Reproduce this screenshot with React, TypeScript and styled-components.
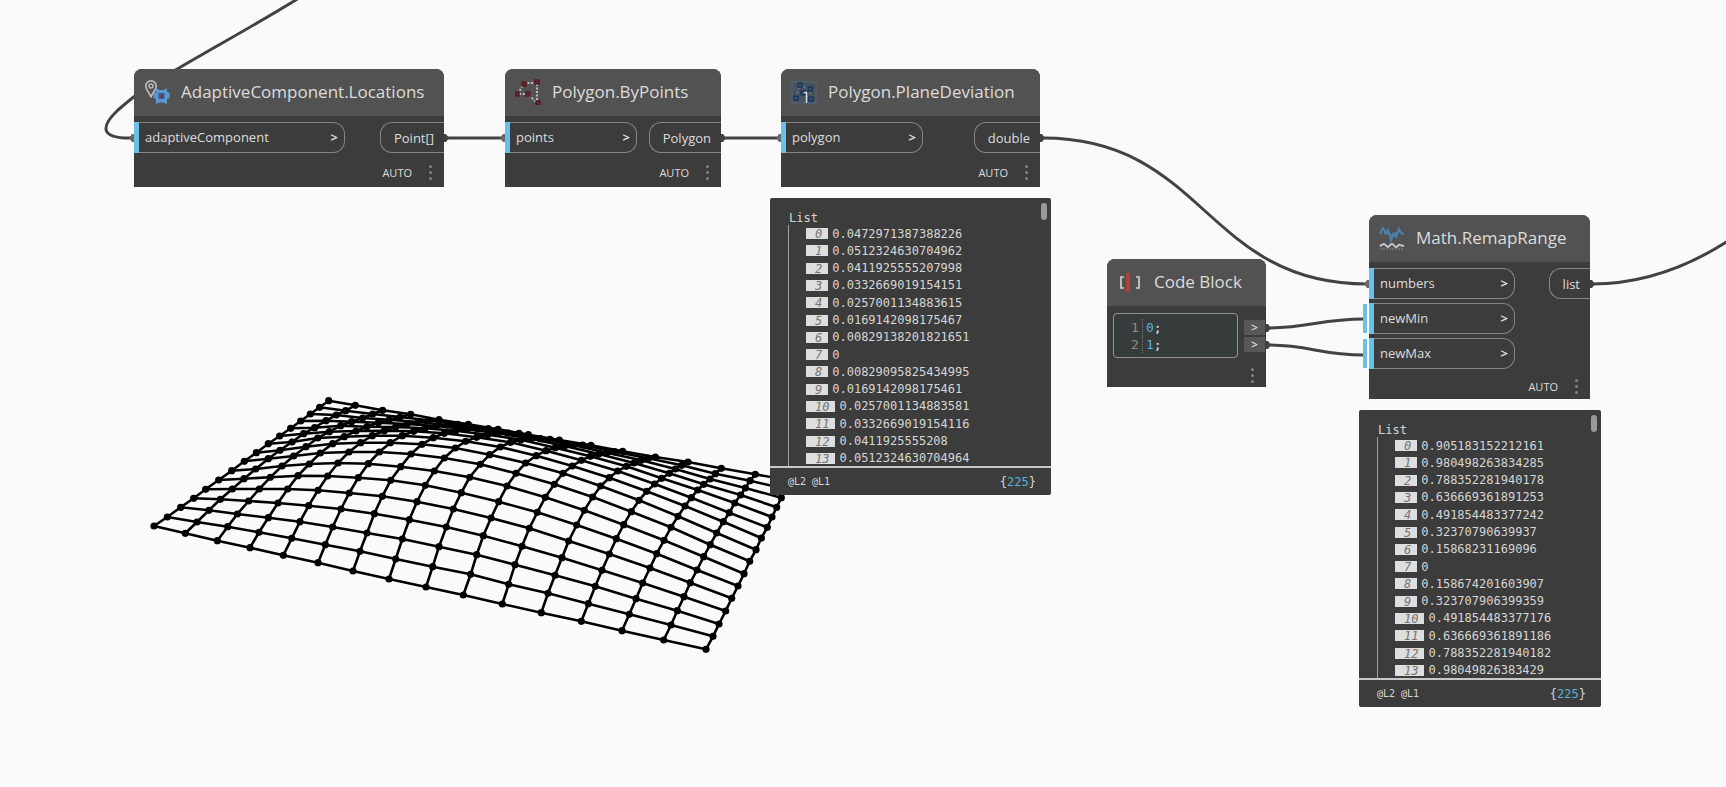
import React from "react";
import styled, { createGlobalStyle } from "styled-components";

const GlobalStyle = createGlobalStyle`
  * { box-sizing: border-box; }
  body { margin: 0; background: #fafafa; font-family: "Open Sans", "Noto Sans", sans-serif; }
  button { font: inherit; color: inherit; cursor: pointer; }
`;

const mono = `"DejaVu Sans Mono", "Liberation Mono", monospace`;

const Canvas = styled.main`
  position: relative;
  width: 100%;
  min-height: 100vh;
  overflow: hidden;
  background: #fafafa;
`;

const Drawing = styled.svg`
  position: absolute;
  inset: 0;
  width: 100%;
  height: 100%;
  pointer-events: none;
`;

const Placed = styled.div<{ $x: number; $y: number; $w: number }>`
  position: absolute;
  left: ${(p) => p.$x}px;
  top: ${(p) => p.$y}px;
  width: ${(p) => p.$w}px;
`;

const NodeCard = styled(Placed).attrs({ as: "section" })`
  color: #dcdcdc;
  background: #3c3c3c;
  border-radius: 8px 8px 0 0;
`;

const NodeHeader = styled.header`
  display: flex;
  align-items: center;
  gap: 11px;
  height: 47px;
  padding: 0 0 2px 10px;
  background: #525252;
  border-radius: 8px 8px 0 0;
`;

const NodeTitle = styled.h2`
  margin: 0;
  font-size: 17px;
  font-weight: 400;
  line-height: 24px;
  white-space: nowrap;
`;

const Ports = styled.div`
  display: flex;
  justify-content: space-between;
  align-items: flex-start;
  padding-top: 6px;
`;

const Inputs = styled.div<{ $w: number }>`
  display: flex;
  flex-direction: column;
  gap: 4px;
  width: ${(p) => p.$w}px;
`;

const InputPort = styled.button<{ $default?: boolean }>`
  position: relative;
  display: flex;
  align-items: center;
  justify-content: space-between;
  height: 31px;
  padding: 0 6px 2px 11px;
  font-size: 13px;
  font-weight: 500;
  line-height: 18px;
  background: transparent;
  border: 1px solid #858585;
  border-left: 0;
  border-radius: 0 12px 12px 0;

  &::before {
    content: "";
    position: absolute;
    left: 0;
    top: -1px;
    bottom: -1px;
    width: 5px;
    background: #6ac0e7;
  }

  &::after {
    content: "";
    display: ${(p) => (p.$default ? "block" : "none")};
    position: absolute;
    left: -6px;
    top: 0;
    bottom: 0;
    width: 4px;
    background: #6ac0e7;
  }
`;

const OutputPort = styled.button`
  height: 31px;
  padding: 0 10px 0 13px;
  font-size: 13px;
  font-weight: 500;
  line-height: 18px;
  background: transparent;
  border: 1px solid #858585;
  border-right: 0;
  border-radius: 12px 0 0 12px;
`;

const NodeFooter = styled.footer<{ $h: number }>`
  display: flex;
  justify-content: flex-end;
  align-items: center;
  gap: 17px;
  height: ${(p) => p.$h}px;
  padding: 5px 12px 0 0;
  font-size: 11px;
  font-weight: 500;
  line-height: 16px;
`;

const MenuButton = styled.button`
  display: flex;
  flex-direction: column;
  gap: 3px;
  padding: 0;
  background: none;
  border: 0;

  i {
    width: 3px;
    height: 3px;
    background: #828282;
    border-radius: 50%;
  }
`;

const CodeBody = styled.div`
  display: flex;
  justify-content: space-between;
  padding: 7px 1px 0 6px;
`;

const Editor = styled.ol`
  width: 125px;
  height: 45px;
  margin: 0;
  padding: 5px 0 0 15px;
  list-style: none;
  background: #363b3b;
  border: 1px solid #929292;
  border-radius: 4px;
  font-family: ${mono};
  font-size: 13px;
  line-height: 17px;
`;

const CodeLine = styled.li`
  display: flex;
  color: #e6e6e6;

  span {
    width: 14px;
    padding-left: 2px;
    color: #8f8f7c;
    border-right: 1px dotted #777;
    margin-right: 3px;
  }
  b {
    font-weight: 400;
    color: #57b2e0;
  }
`;

const CodeOutputs = styled.div`
  display: flex;
  flex-direction: column;
  gap: 2px;
  padding-top: 7px;
`;

const CodeOutput = styled.button`
  width: 21px;
  height: 15px;
  padding: 0;
  background: #585858;
  border: 0;
  font-size: 12px;
  font-weight: 600;
  line-height: 14px;
`;

const Preview = styled(Placed).attrs({ as: "section" })`
  color: #d6d6d6;
  background: #3c3c3c;
  border-radius: 2px;
  font-family: ${mono};
  font-size: 12px;
`;

const PreviewBody = styled.div`
  position: relative;
  height: 270px;
  padding: 13px 0 0 18px;
  overflow: hidden;
  border-bottom: 2px solid #c8c8c8;
`;

const ListLabel = styled.div`
  padding-left: 1px;
  line-height: 14px;
`;

const Rows = styled.ol`
  display: grid;
  grid-auto-rows: 1fr;
  height: 242px;
  margin: 0;
  padding: 0 0 0 17px;
  list-style: none;
  border-left: 1px solid #a0a0a0;
`;

const Row = styled.li`
  display: flex;
  align-items: center;
  gap: 4px;
  line-height: 16px;
`;

const Index = styled.em`
  height: 11px;
  padding: 0 6px 0 9px;
  line-height: 12px;
  color: #747474;
  background: #dedede;
`;

const Thumb = styled.div`
  position: absolute;
  top: 5px;
  right: 4px;
  width: 6px;
  height: 17px;
  background: #999;
  border-radius: 3px;
`;

const PreviewFooter = styled.footer`
  display: flex;
  justify-content: space-between;
  align-items: center;
  height: 27px;
  padding: 0 15px 0 18px;

  small { font-size: 10px; }
  b { font-weight: 400; color: #57b2d8; }
`;

const Icon = styled.svg`
  flex: none;
  width: 26px;
  height: 26px;
`;

const LocationsIcon = () => (
  <Icon viewBox="0 0 26 26">
    <path d="M7 17.500C4 12.500 1.800 10 1.800 7a5.200 5.200 0 0 1 10.400 0c0 3-2.200 5.500-5.200 10.500z" fill="none" stroke="#b9b9b9" strokeWidth="1.700" />
    <circle cx="7" cy="7" r="2" fill="none" stroke="#b9b9b9" strokeWidth="1.500" />
    <path d="M12 9l3.500 2h4L23 9v4l2.500 1v5L23 20v5l-3.500-1.500h-4L12 25v-5l-2.500-1v-4.500L12 13z" fill="#5b97d2" />
    <rect x="14.500" y="14" width="6" height="6" fill="#33608f" />
    <rect x="16.200" y="15.700" width="2.600" height="2.600" fill="#7c2f4c" />
  </Icon>
);

const ByPointsIcon = () => (
  <Icon viewBox="0 0 26 26">
    <path d="M9 4H22V24L13 15H3z" fill="none" stroke="#bdbdbd" strokeWidth="2" strokeDasharray="2 1.500" />
    {[[9, 5], [22, 3], [23, 24], [13, 15], [2, 15]].map(([x, y]) => (
      <rect key={`${x}-${y}`} x={x - 2} y={y - 2} width="4" height="4" fill="#4a3338" stroke="#5f1a25" strokeWidth="1.500" />
    ))}
  </Icon>
);

const DeviationIcon = () => (
  <Icon viewBox="0 0 26 26">
    <rect x="1" y="3" width="24" height="21" fill="#46525e" stroke="#53718c" strokeDasharray="2 1" />
    <path d="M9 6L19 10 20 20 13 15 5 18z" fill="none" stroke="#6a7885" strokeWidth="1.500" strokeDasharray="2 1.500" />
    {[[9, 6], [19, 10], [20, 20], [12, 14], [5, 19]].map(([x, y]) => (
      <rect key={`${x}-${y}`} x={x - 2} y={y - 2} width="4" height="4" fill="#35577c" stroke="#1c3553" strokeWidth="1.500" />
    ))}
    <path d="M15.500 13v11M13 13.500h3" stroke="#d8d8d8" strokeWidth="1.500" fill="none" />
  </Icon>
);

const RemapIcon = () => (
  <Icon viewBox="0 0 26 26">
    <path d="M1 9l3-6 3 5 2-3 3 9 2-5 3 3 3-8 2 4 3 1" fill="none" stroke="#4a7fae" strokeWidth="2" />
    <path d="M5 8l6 1 1 6 2-5 5-3" fill="none" stroke="#4a7fae" strokeWidth="2" />
    <path d="M1 21c2-1 3-2 4-2s3 3 4 3 2-3 4-3 2 3 4 3 2-3 4-2l4 1" fill="none" stroke="#c4c4c4" strokeWidth="2" />
    <path d="M1 24h24" stroke="#8a8a8a" strokeDasharray="2 1" />
  </Icon>
);

const CodeIcon = () => (
  <Icon viewBox="0 0 26 26">
    <path d="M7 8H4v11h3M19 8h3v11h-3" fill="none" stroke="#cfcfcf" strokeWidth="1.700" />
    <path d="M11 4v19" stroke="#c23b34" strokeWidth="3.500" />
  </Icon>
);

const Menu = () => (
  <MenuButton type="button" aria-label="Node options">
    <i />
    <i />
    <i />
  </MenuButton>
);

type NodeProps = {
  x: number;
  y: number;
  w: number;
  icon: React.ReactNode;
  title: string;
  inputsWidth: number;
  inputs: { name: string; hasDefault?: boolean }[];
  output: string;
  footer?: number;
};

const GraphNode = ({ x, y, w, icon, title, inputsWidth, inputs, output, footer = 34 }: NodeProps) => (
  <NodeCard $x={x} $y={y} $w={w}>
    <NodeHeader>
      {icon}
      <NodeTitle>{title}</NodeTitle>
    </NodeHeader>
    <Ports>
      <Inputs $w={inputsWidth}>
        {inputs.map((port) => (
          <InputPort key={port.name} type="button" $default={port.hasDefault}>
            <span>{port.name}</span>
            <b>&gt;</b>
          </InputPort>
        ))}
      </Inputs>
      <OutputPort type="button">{output}</OutputPort>
    </Ports>
    <NodeFooter $h={footer}>
      <span>AUTO</span>
      <Menu />
    </NodeFooter>
  </NodeCard>
);

const ListPreview = ({ x, y, w, values }: { x: number; y: number; w: number; values: string[] }) => (
  <Preview $x={x} $y={y} $w={w}>
    <PreviewBody>
      <ListLabel>List</ListLabel>
      <Rows>
        {values.map((value, i) => (
          <Row key={i}>
            <Index>{i}</Index>
            <span>{value}</span>
          </Row>
        ))}
      </Rows>
      <Thumb />
    </PreviewBody>
    <PreviewFooter>
      <small>@L2 @L1</small>
      <span>
        {"{"}
        <b>225</b>
        {"}"}
      </span>
    </PreviewFooter>
  </Preview>
);

const deviations = [
  "0.0472971387388226", "0.0512324630704962", "0.0411925555207998", "0.0332669019154151",
  "0.0257001134883615", "0.0169142098175467", "0.00829138201821651", "0",
  "0.00829095825434995", "0.0169142098175461", "0.0257001134883581", "0.0332669019154116",
  "0.0411925555208", "0.0512324630704964",
];

const remapped = [
  "0.905183152212161", "0.980498263834285", "0.788352281940178", "0.636669361891253",
  "0.491854483377242", "0.32370790639937", "0.15868231169096", "0",
  "0.158674201603907", "0.323707906399359", "0.491854483377176", "0.636669361891186",
  "0.788352281940182", "0.98049826383429",
];

/* Vertices of the panelled surface, one list of x and y per column, front edge first. */
const columns: [number[], number[]][] = [
  [[42, 82, 122, 161, 197, 236, 275, 313, 349, 385, 419, 452, 482, 511, 539, 566],
   [408, 381, 352, 325, 298, 270, 242, 214, 188, 161, 138, 115, 93, 72, 52, 32]],
  [[136, 171, 207, 241, 277, 312, 347, 385, 420, 456, 491, 524, 558, 589, 617, 646],
   [430, 396, 361, 328, 297, 266, 237, 206, 181, 156, 131, 113, 92, 75, 62, 46]],
  [[232, 263, 292, 326, 358, 391, 426, 461, 498, 533, 568, 602, 635, 668, 698, 728],
   [452, 410, 372, 333, 297, 262, 228, 198, 170, 144, 125, 107, 95, 84, 72, 61]],
  [[330, 357, 385, 414, 443, 474, 508, 541, 578, 613, 648, 681, 715, 748, 780, 812],
   [473, 427, 383, 339, 297, 257, 222, 189, 161, 140, 123, 110, 98, 89, 81, 73]],
  [[430, 455, 480, 506, 534, 563, 594, 627, 662, 697, 733, 767, 801, 834, 866, 897],
   [496, 445, 395, 347, 301, 258, 219, 186, 158, 137, 122, 111, 102, 96, 91, 89]],
  [[534, 556, 578, 603, 628, 655, 685, 718, 751, 787, 821, 855, 889, 922, 953, 985],
   [518, 464, 411, 357, 309, 263, 221, 186, 158, 137, 124, 115, 108, 105, 103, 103]],
  [[639, 660, 681, 703, 727, 752, 782, 813, 846, 880, 913, 947, 981, 1013, 1045, 1074],
   [543, 484, 429, 371, 319, 271, 230, 192, 163, 143, 130, 122, 118, 116, 116, 118]],
  [[747, 767, 787, 808, 831, 856, 883, 913, 946, 977, 1010, 1043, 1074, 1105, 1137, 1165],
   [567, 507, 447, 389, 335, 286, 243, 204, 174, 154, 142, 134, 130, 129, 130, 134]],
  [[858, 878, 897, 919, 940, 964, 989, 1021, 1049, 1081, 1112, 1143, 1173, 1202, 1230, 1258],
   [591, 530, 470, 411, 357, 308, 262, 223, 194, 171, 157, 149, 146, 146, 148, 150]],
  [[970, 992, 1010, 1030, 1053, 1076, 1101, 1128, 1157, 1189, 1218, 1246, 1274, 1301, 1328, 1353],
   [615, 553, 494, 437, 384, 335, 288, 250, 219, 197, 182, 173, 168, 166, 165, 166]],
  [[1087, 1106, 1125, 1146, 1168, 1192, 1216, 1243, 1269, 1297, 1324, 1351, 1376, 1401, 1424, 1448],
   [642, 583, 524, 469, 415, 367, 322, 283, 250, 228, 211, 199, 192, 188, 185, 184]],
  [[1204, 1224, 1245, 1266, 1286, 1310, 1333, 1358, 1382, 1408, 1433, 1459, 1482, 1504, 1525, 1546],
   [668, 610, 556, 503, 453, 405, 361, 321, 288, 263, 243, 229, 219, 211, 205, 201]],
  [[1324, 1345, 1366, 1386, 1408, 1429, 1451, 1474, 1497, 1520, 1544, 1565, 1588, 1606, 1625, 1644],
   [694, 641, 589, 541, 492, 446, 404, 365, 331, 304, 282, 265, 250, 237, 226, 216]],
  [[1446, 1468, 1488, 1508, 1530, 1550, 1572, 1593, 1614, 1635, 1654, 1673, 1691, 1710, 1726, 1744],
   [722, 673, 626, 579, 534, 491, 451, 412, 379, 348, 323, 300, 283, 267, 251, 235]],
  [[1571, 1593, 1612, 1632, 1651, 1671, 1691, 1711, 1730, 1750, 1768, 1784, 1802, 1816, 1830, 1846],
   [750, 705, 662, 620, 578, 540, 500, 464, 429, 395, 368, 339, 315, 294, 272, 253]],
  [[1698, 1719, 1737, 1757, 1775, 1794, 1812, 1829, 1848, 1864, 1882, 1896, 1910, 1924, 1936, 1949],
   [778, 739, 702, 663, 625, 588, 551, 514, 479, 444, 412, 381, 352, 323, 297, 271]],
];

const vertices = columns.map(([xs, ys]) => xs.map((x, i) => [140 + x / 3, 390 + ys[i] / 3]));
const toPath = (points: number[][]) => "M" + points.map((p) => p.map((n) => n.toFixed(1)).join(" ")).join("L");

const Surface = () => (
  <g fill="none" stroke="#000" strokeWidth="2.600">
    {vertices.map((column, i) => (
      <path key={`c${i}`} d={toPath(column)} />
    ))}
    {vertices[0].map((_, i) => (
      <path key={`r${i}`} d={toPath(vertices.map((column) => column[i]))} />
    ))}
    {vertices.flatMap((column, i) =>
      column.map(([x, y], j) => <circle key={`${i}-${j}`} cx={x} cy={y} r="3.600" fill="#000" stroke="none" />)
    )}
  </g>
);

const wires = [
  "M299 -2C262 21 220 44 179 68C150 83 133 97 118 110C100 127 100 139 133 138",
  "M446 138H505",
  "M723 138H781",
  "M1043 138C1205 138 1205 284 1367 284",
  "M1268 328C1310 328 1320 319 1364 319",
  "M1268 345C1310 345 1320 355 1364 355",
  "M1592 284C1640 284 1686 268 1728 241",
];

const outlets = [[444, 138], [721, 138], [1040, 138], [1266, 328], [1266, 345], [1590, 284]];
const inlets = [[134, 138], [505, 138], [781, 138], [1369, 284]];

export default function App() {
  return (
    <>
      <GlobalStyle />
      <Canvas>
        <Drawing aria-hidden="true">
          <Surface />
          <g fill="none" stroke="#424242" strokeWidth="3">
            {wires.map((d) => (
              <path key={d} d={d} />
            ))}
          </g>
          <g fill="#424242">
            {outlets.map(([x, y]) => (
              <path key={`${x}-${y}`} d={`M${x} ${y - 4}h2l3 4l-3 4h-2z`} />
            ))}
            {inlets.map(([x, y]) => (
              <path key={`${x}-${y}`} d={`M${x} ${y - 4}h-2l-3 4l3 4h2z`} fill="#686868" />
            ))}
          </g>
        </Drawing>

        <GraphNode x={134} y={69} w={310} icon={<LocationsIcon />} title="AdaptiveComponent.Locations"
          inputsWidth={211} inputs={[{ name: "adaptiveComponent" }]} output="Point[]" />
        <GraphNode x={505} y={69} w={216} icon={<ByPointsIcon />} title="Polygon.ByPoints"
          inputsWidth={132} inputs={[{ name: "points" }]} output="Polygon" />
        <GraphNode x={781} y={69} w={259} icon={<DeviationIcon />} title="Polygon.PlaneDeviation"
          inputsWidth={142} inputs={[{ name: "polygon" }]} output="double" />
        <ListPreview x={770} y={198} w={281} values={deviations} />

        <NodeCard $x={1107} $y={259} $w={159}>
          <NodeHeader>
            <CodeIcon />
            <NodeTitle>Code Block</NodeTitle>
          </NodeHeader>
          <CodeBody>
            <Editor role="textbox" aria-label="Code" aria-multiline="true">
              <CodeLine><span>1</span><b>0</b>;</CodeLine>
              <CodeLine><span>2</span><b>1</b>;</CodeLine>
            </Editor>
            <CodeOutputs>
              <CodeOutput type="button">&gt;</CodeOutput>
              <CodeOutput type="button">&gt;</CodeOutput>
            </CodeOutputs>
          </CodeBody>
          <NodeFooter $h={29}>
            <Menu />
          </NodeFooter>
        </NodeCard>

        <GraphNode x={1369} y={215} w={221} icon={<RemapIcon />} title="Math.RemapRange" inputsWidth={146}
          inputs={[{ name: "numbers" }, { name: "newMin", hasDefault: true }, { name: "newMax", hasDefault: true }]}
          output="list" footer={30} />
        <ListPreview x={1359} y={410} w={242} values={remapped} />
      </Canvas>
    </>
  );
}
